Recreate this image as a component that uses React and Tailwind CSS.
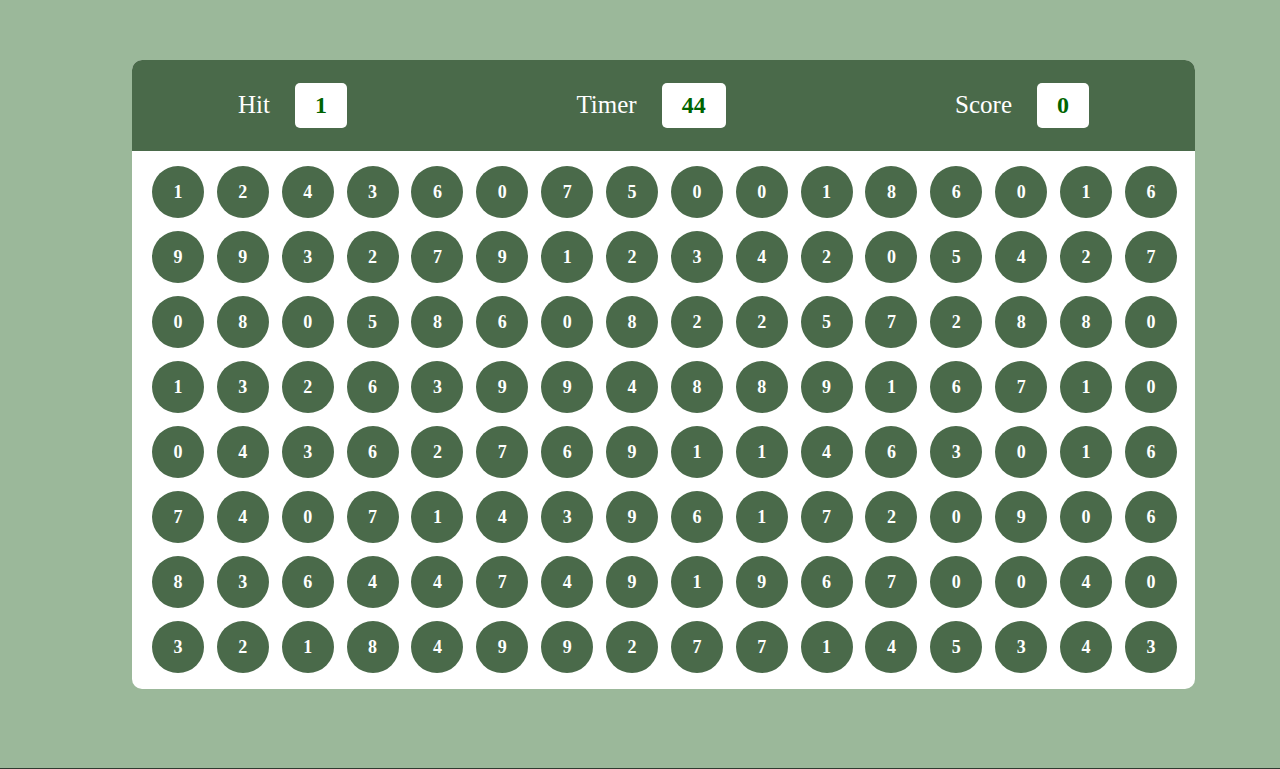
import React from 'react';

// grille de la partie en cours
const rows = [
  '1243607500186016',
  '9932791234205427',
  '0805860822572880',
  '1326399488916710',
  '0436276911463016',
  '7407143961720906',
  '8364474919670040',
  '3218499277145343',
];

const Stat = ({ label, value }) => (
  <div className="flex items-center gap-[25px]">
    <span className="text-[25px] text-white">{label}</span>
    <div className="flex h-[45px] items-center rounded-[5px] bg-white px-5 text-[24px] font-bold text-[#006400]">
      {value}
    </div>
  </div>
);

export default function App() {
  return (
    <div className="flex h-[769px] flex-col bg-[#9bb89a] font-['Liberation_Serif',serif]">
      <div className="flex-1 pl-[132px] pt-[60px]">
        <div className="w-[1063px] overflow-hidden rounded-[10px] bg-white">
          <div className="flex h-[91px] items-center justify-between bg-[#4a6a4a] px-[106px] pb-[1px]">
            <Stat label="Hit" value="1" />
            <Stat label="Timer" value="44" />
            <Stat label="Score" value="0" />
          </div>
          <div className="grid grid-cols-[repeat(16,52px)] justify-between gap-y-[13px] pb-[16px] pl-[20px] pr-[18px] pt-[15px]">
            {rows.map((row, r) =>
              row.split('').map((n, c) => (
                <div
                  key={`${r}-${c}`}
                  className="flex h-[52px] w-[52px] items-center justify-center rounded-full bg-[#4a6a4a] text-[18px] font-bold text-white"
                >
                  {n}
                </div>
              ))
            )}
          </div>
        </div>
      </div>
      <div className="h-[1px] bg-[#2f3b30]" />
    </div>
  );
}
